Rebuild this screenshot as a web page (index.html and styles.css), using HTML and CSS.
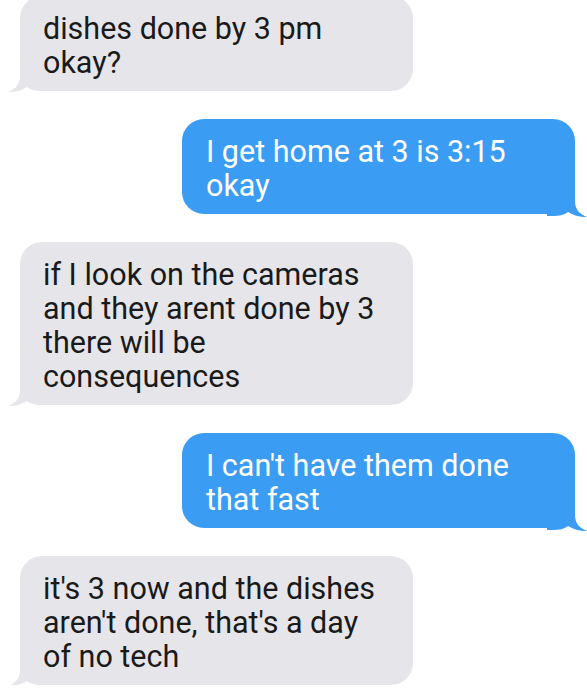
FILE: index.html
```html
<!DOCTYPE html>
<html lang="en">
<head>
  <meta charset="UTF-8" />
  <title>Messages</title>
  <link rel="stylesheet" href="styles.css">
</head>
<body>
  <div class="chat">
    <div class="msg in">
      <div class="bubble">
        <span class="text">dishes done by 3 pm<br />okay?</span>
        <svg class="tail" viewBox="0 0 40 30" width="40" height="30"><path d="M12 0 L12 14 C12 22 8 27 0 30 C8 30 14 28 19 25 C23 28 28 29 34 29 L40 29 L40 0 Z" /></svg>
      </div>
    </div>
    <div class="msg out">
      <div class="bubble">
        <span class="text">I get home at 3 is 3:15<br />okay</span>
        <svg class="tail" viewBox="0 0 40 30" width="40" height="30"><path d="M12 0 L12 14 C12 22 8 27 0 30 C8 30 14 28 19 25 C23 28 28 29 34 29 L40 29 L40 0 Z" /></svg>
      </div>
    </div>
    <div class="msg in">
      <div class="bubble">
        <span class="text">if I look on the cameras<br />and they arent done by 3<br />there will be<br />consequences</span>
        <svg class="tail" viewBox="0 0 40 30" width="40" height="30"><path d="M12 0 L12 14 C12 22 8 27 0 30 C8 30 14 28 19 25 C23 28 28 29 34 29 L40 29 L40 0 Z" /></svg>
      </div>
    </div>
    <div class="msg out">
      <div class="bubble">
        <span class="text">I can't have them done<br />that fast</span>
        <svg class="tail" viewBox="0 0 40 30" width="40" height="30"><path d="M12 0 L12 14 C12 22 8 27 0 30 C8 30 14 28 19 25 C23 28 28 29 34 29 L40 29 L40 0 Z" /></svg>
      </div>
    </div>
    <div class="msg in">
      <div class="bubble">
        <span class="text">it's 3 now and the dishes<br />aren't done, that's a day<br />of no tech</span>
        <svg class="tail" viewBox="0 0 40 30" width="40" height="30"><path d="M12 0 L12 14 C12 22 8 27 0 30 C8 30 14 28 19 25 C23 28 28 29 34 29 L40 29 L40 0 Z" /></svg>
      </div>
    </div>
  </div>
</body>
</html>
```

FILE: styles.css
```css
body {
  margin: 0;
  background-color: #fff;
  font-family: Roboto, "Noto Sans", sans-serif;
  overflow: hidden;
}

.chat {
  display: flex;
  flex-direction: column;
  gap: 28px;
  margin-top: -4px;
  padding: 0 12px 0 20px;
}

.msg {
  display: flex;
}

.msg.out {
  justify-content: flex-end;
}

.bubble {
  position: relative;
  width: 393px;
  box-sizing: border-box;
  padding: 16px 20px 11px 23px;
  border-radius: 22px;
  font-size: 30.5px;
  line-height: 34px;
}

/* keep the text above the tail */
.bubble .text {
  position: relative;
  z-index: 2;
}

.in .bubble {
  background-color: #e6e6ea;
  color: #1a1a1a;
}

.out .bubble {
  background-color: #3a9cf2;
  color: #fff;
  padding-left: 24px;
}

/* little tail under the bubble corner */
.tail {
  position: absolute;
  bottom: -1px;
  left: -12px;
  z-index: 1;
}

.in .tail {
  fill: #e6e6ea;
}

.out .tail {
  fill: #3a9cf2;
  left: auto;
  right: -12px;
  transform: scaleX(-1);
  bottom: -3px;
}
```
